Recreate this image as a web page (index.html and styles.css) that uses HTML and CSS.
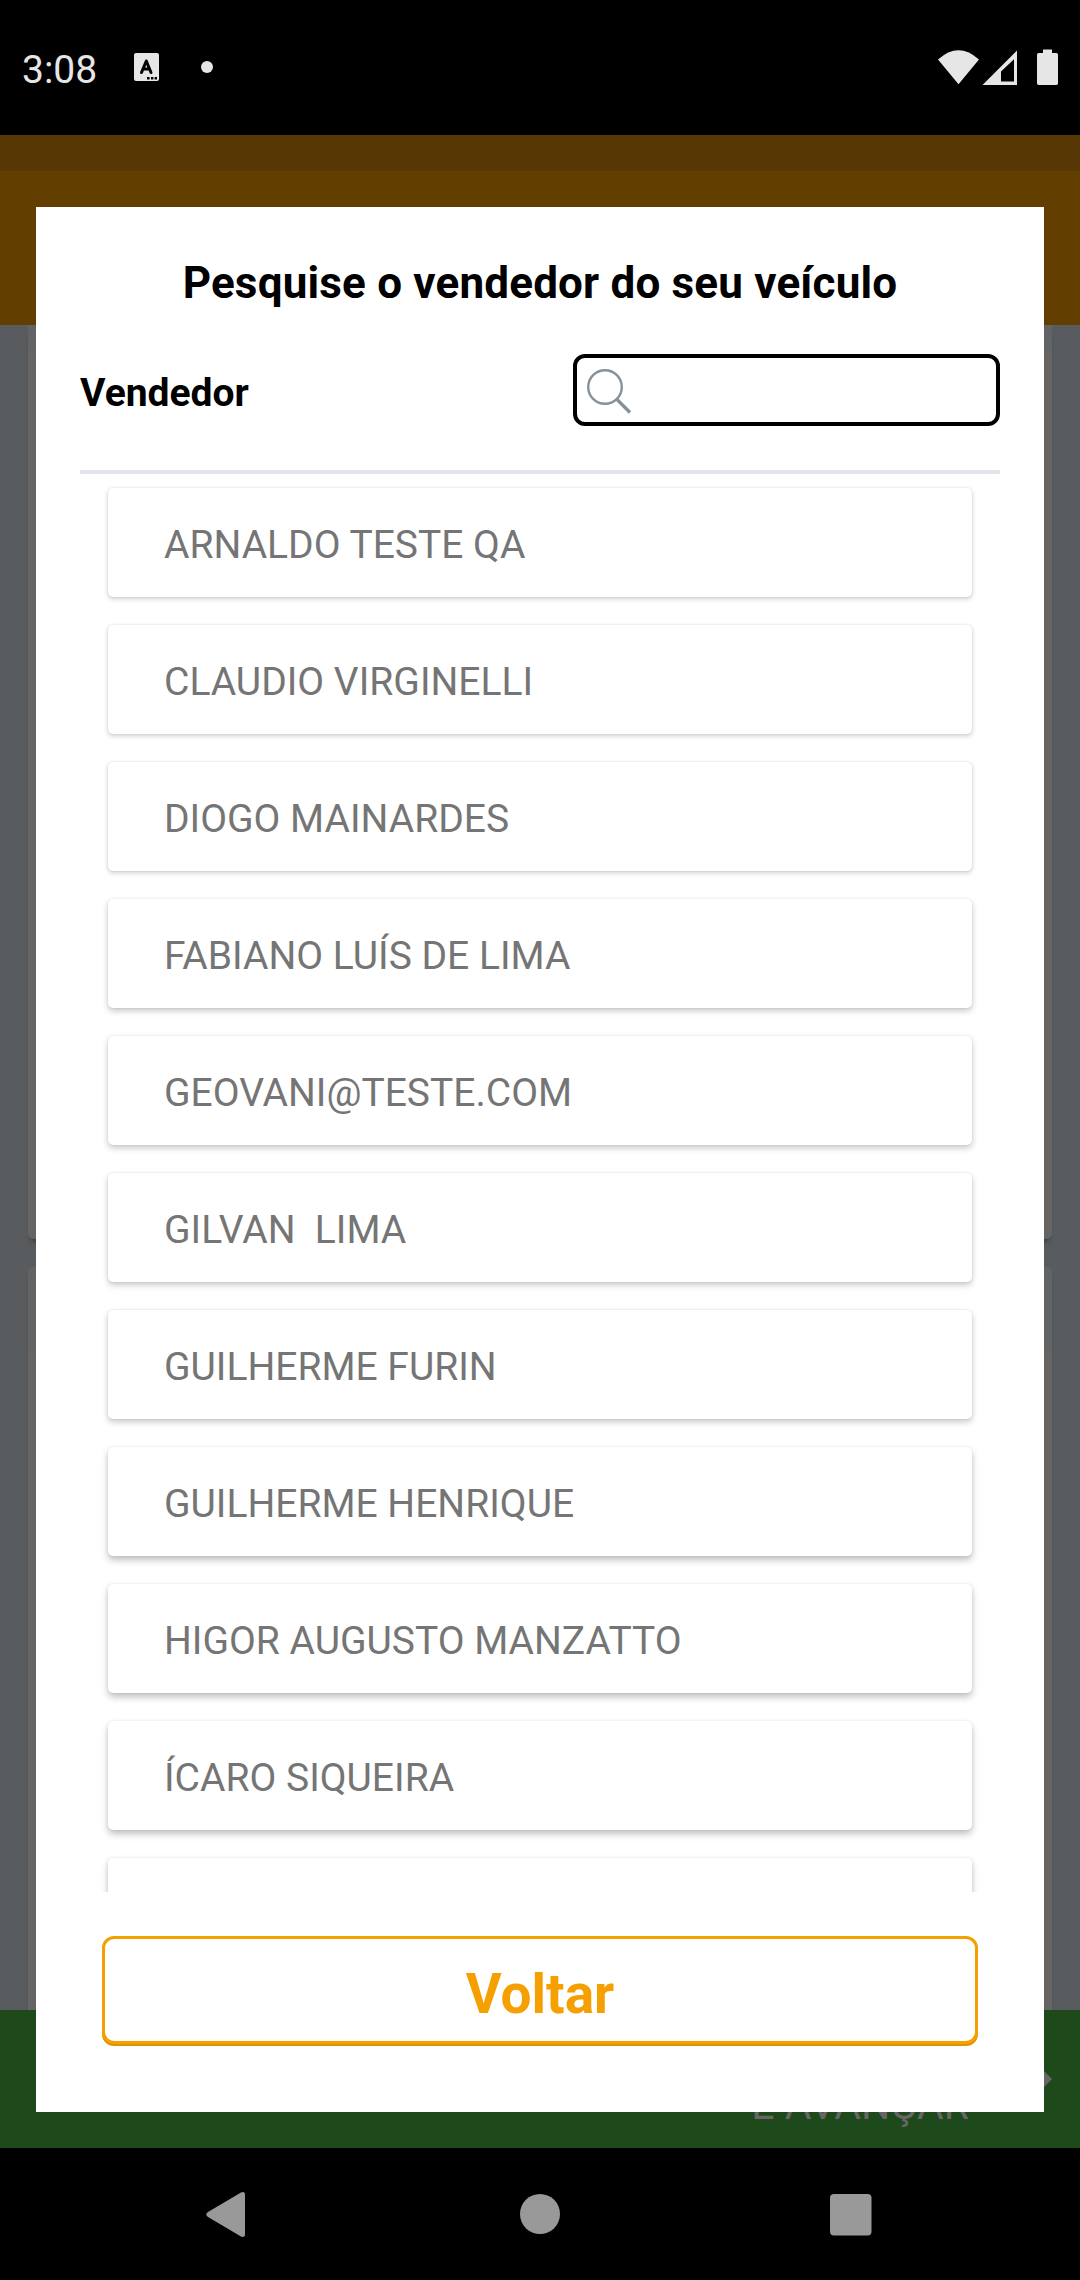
FILE: index.html
```html
<!DOCTYPE html>
<html lang="pt-BR">
<head>
<meta charset="utf-8">
<title>Pesquise o vendedor</title>
<link rel="stylesheet" href="styles.css">
</head>
<body>
<div class="screen">
  <header class="status">
    <span class="clock">3:08</span>
    <svg class="status-left" width="90" height="40" viewBox="0 0 90 40">
      <rect x="4" y="5" width="25" height="28" rx="2" fill="#e6e6e6"/>
      <path d="M11.5 24.5 16.3 13 21 24.5M13.2 21h6.2" fill="none" stroke="#000" stroke-width="3" stroke-linecap="round" stroke-linejoin="round"/>
      <path d="M17 29h2.6v2.4H17zM21 29h2.4v2.4H21zM24.600 29h2.400v2.400h-2.400z" fill="#000"/>
      <circle cx="77" cy="19" r="6" fill="#e6e6e6"/>
    </svg>
    <svg class="status-right" width="130" height="40" viewBox="0 0 130 40" fill="#e6e6e6">
      <path d="M8 11.500Q28.500-7 49 11.500L28.500 36.200z"/>
      <path fill-rule="evenodd" d="M87 2.500V37H52.500zM84 11.200 71 23.500V33.500H84z"/>
      <path d="M113 1.500h9V5h4.300q1.700 0 1.700 1.700v28.600q0 1.700-1.700 1.700h-17.600q-1.700 0-1.700-1.700V6.700Q107 5 108.700 5h4.300z"/>
    </svg>
  </header>
  <main class="app">
    <div class="app-strip"></div>
    <div class="app-bar"></div>
    <div class="app-body">
      <section class="panel panel-first"><div class="panel-head"></div></section>
      <section class="panel panel-second"><div class="panel-head"></div></section>
    </div>
    <div class="advance">
      <span class="advance-label">E AVANÇAR</span>
      <svg class="advance-icon" width="40" height="40" viewBox="0 0 40 40"><path d="M20 0 40 20 20 40 16 36 29 23H0V17H29L16 4z" fill="#666"/></svg>
    </div>
    <div class="modal">
      <h1 class="title">Pesquise o vendedor do seu veículo</h1>
      <div class="filter">
        <span class="filter-label">Vendedor</span>
        <div class="search">
          <svg width="46" height="48" viewBox="0 0 46 48" fill="none" stroke="#87919a">
            <circle cx="19" cy="20" r="16.800" stroke-width="2.400"/>
            <path d="M31 32.500 44 45.500" stroke-width="3.400"/>
          </svg>
        </div>
      </div>
      <ul class="list">
        <li class="item">ARNALDO TESTE QA</li>
        <li class="item">CLAUDIO VIRGINELLI</li>
        <li class="item">DIOGO MAINARDES</li>
        <li class="item">FABIANO LUÍS DE LIMA</li>
        <li class="item">GEOVANI@TESTE.COM</li>
        <li class="item">GILVAN  LIMA</li>
        <li class="item">GUILHERME FURIN</li>
        <li class="item">GUILHERME HENRIQUE</li>
        <li class="item">HIGOR AUGUSTO MANZATTO</li>
        <li class="item">ÍCARO SIQUEIRA</li>
        <li class="item"></li>
      </ul>
      <button class="back">Voltar</button>
    </div>
  </main>
  <nav class="nav">
    <svg width="1080" height="132" viewBox="0 0 1080 132" fill="#999">
      <path d="M208 64 241 44.500Q245 43 245 47V86Q245 90 241 88.500L208 69Q204.500 66.500 208 64z"/>
      <circle cx="540" cy="66" r="20"/>
      <rect x="830" y="46" width="41.500" height="41.500" rx="4"/>
    </svg>
  </nav>
</div>
</body>
</html>
```
FILE: styles.css
```css
* { box-sizing: border-box; }
body { margin: 0; background: #000; font-family: Roboto, sans-serif; }
.screen { display: flex; flex-direction: column; width: 1080px; height: 2280px; overflow: hidden; }

.status { display: flex; align-items: center; height: 135px; padding: 0 20px 0 22px; color: #e6e6e6; }
.clock { width: 108px; font-size: 39px; line-height: 46px; padding-top: 5px; }
.status-left { margin-top: 0; }
.status-right { margin-left: auto; }

.app { position: relative; display: flex; flex-direction: column; height: 2013px; background: #585c5f; }
.app-strip { height: 36px; background: #573804; }
.app-bar { height: 154px; background: #623f00; }
.app-body { display: flex; flex-direction: column; gap: 28px; height: 1685px; padding: 0 28px; overflow: hidden; }
.panel { flex: none; background: #666564; overflow: hidden; box-shadow: 0 6px 6px -4px rgba(0, 0, 0, .5); }
.panel-head { background: #616365; }
.panel-first { height: 914px; border-radius: 0 0 6px 6px; }
.panel-first .panel-head { height: 25px; }
.panel-second { height: 760px; border-radius: 6px 6px 0 0; }
.panel-second .panel-head { height: 83px; }
.advance { display: flex; justify-content: flex-end; height: 138px; padding-right: 28px; background: #1e491a; color: #666; }
.advance-label { margin-top: 71px; font-size: 41px; line-height: 48px; }
.advance-icon { margin: 49px 0 0 43px; }

.modal { position: absolute; top: 72px; left: 36px; width: 1008px; height: 1905px; display: flex; flex-direction: column; align-items: stretch; padding: 0 44px; background: #fff; }
.title { margin: 50px 0 0; font-size: 44px; line-height: 52px; font-weight: 700; letter-spacing: .18px; text-align: center; color: #000; }
.filter { display: flex; justify-content: space-between; align-items: center; height: 72px; margin-top: 45px; }
.filter-label { font-size: 39px; line-height: 46px; font-weight: 700; padding-top: 5px; }
.search { width: 427px; height: 72px; padding: 9px; border: 4px solid #000; border-radius: 12px; }
.search svg { display: block; }
.list { list-style: none; display: flex; flex-direction: column; gap: 28px; height: 1422px; margin: 44px 0 0; padding: 14px 28px 0; overflow: hidden; border-top: 4px solid #e1e5e9; }
.item { flex: none; height: 109px; padding: 1px 0 0 56px; border-radius: 5px; background: #fff; color: #757575; font-size: 39px; line-height: 112px; white-space: pre; box-shadow: 0 2px 5px rgba(0, 0, 0, .19), 0 0 2px rgba(0, 0, 0, .12); }
.item:nth-child(n+4) { box-shadow: 0 3px 6px rgba(0, 0, 0, .22), 0 0 2px rgba(0, 0, 0, .11); }
.item:nth-child(n+8) { box-shadow: 0 4px 7px rgba(0, 0, 0, .25), 0 0 2px rgba(0, 0, 0, .1); }
.back { height: 108px; margin: 44px 22px 0; padding: 8px 0 0; border: 3px solid #f5a000; border-radius: 12px; background: #fff; box-shadow: 0 2px 0 #e19200; color: #f5a000; font-family: inherit; font-size: 55px; line-height: 64px; font-weight: 700; }
.nav { height: 132px; }
.nav svg { display: block; }
```
